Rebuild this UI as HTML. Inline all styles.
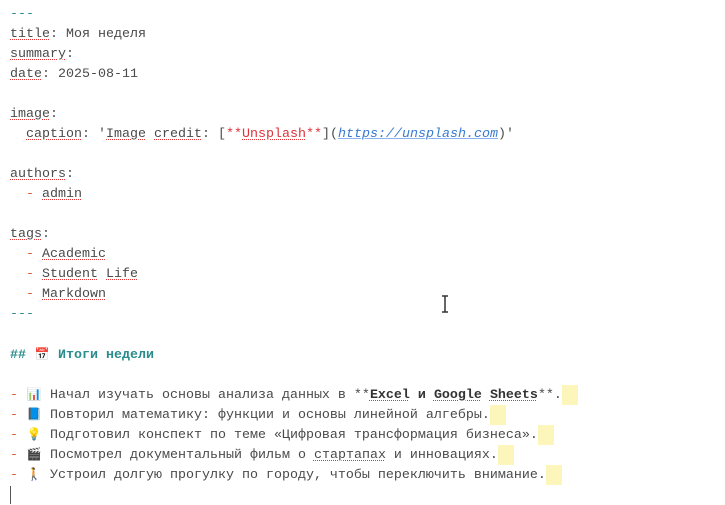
<!DOCTYPE html>
<html><head><meta charset="utf-8"><style>
body{margin:0;background:#fff;width:725px;height:500px;overflow:hidden}
.ed{position:absolute;left:10px;top:5px;font-family:"Liberation Mono","DejaVu Sans Mono",monospace;font-size:13.33px;line-height:20px;color:#4a4a4a}
.l{height:20px;white-space:pre}
.t{color:#2a8c8c}
.h{color:#2a8c8c;font-weight:bold}
.d{color:#d0602a}
.r{color:#e0303a}
.u{text-decoration-line:underline;text-decoration-style:dotted;text-decoration-color:#e83030;text-decoration-thickness:1px;text-underline-offset:2px}
.a{color:#3a7ad0;font-style:italic;text-decoration:underline;text-decoration-color:#8ab4f0}
.b{font-weight:bold;color:#333}
.y{display:inline-block;width:16px;height:20px;background:#fdf6bb;vertical-align:top}
.e{display:inline-block;width:16px;text-align:center;font-size:12px}
.cur{display:inline-block;width:1px;height:18px;background:#555;vertical-align:top;margin-top:1px}
</style></head><body>
<div class="ed"><div class="l t">---</div><div class="l"><span class="u">title</span>: Моя неделя</div><div class="l"><span class="u">summary</span>:</div><div class="l"><span class="u">date</span>: 2025-08-11</div><div class="l"> </div><div class="l"><span class="u">image</span>:</div><div class="l">  <span class="u">caption</span>: '<span class="u">Image</span> <span class="u">credit</span>: [<span class="r">**<span class="u">Unsplash</span>**</span>](<span class="a">https://unsplash.com</span>)'</div><div class="l"> </div><div class="l"><span class="u">authors</span>:</div><div class="l">  <span class="d">-</span> <span class="u">admin</span></div><div class="l"> </div><div class="l"><span class="u">tags</span>:</div><div class="l">  <span class="d">-</span> <span class="u">Academic</span></div><div class="l">  <span class="d">-</span> <span class="u">Student</span> <span class="u">Life</span></div><div class="l">  <span class="d">-</span> <span class="u">Markdown</span></div><div class="l t">---</div><div class="l"> </div><div class="l h">## <span class="e">📅</span> Итоги недели</div><div class="l"> </div><div class="l"><span class="d">-</span> <span class="e">📊</span> Начал изучать основы анализа данных в **<span class="b"><span class="u">Excel</span> и <span class="u">Google</span> <span class="u">Sheets</span></span>**.<span class="y"></span></div><div class="l"><span class="d">-</span> <span class="e">📘</span> Повторил математику: функции и основы линейной алгебры.<span class="y"></span></div><div class="l"><span class="d">-</span> <span class="e">💡</span> Подготовил конспект по теме «Цифровая трансформация бизнеса».<span class="y"></span></div><div class="l"><span class="d">-</span> <span class="e">🎬</span> Посмотрел документальный фильм о <span class="u">стартапах</span> и инновациях.<span class="y"></span></div><div class="l"><span class="d">-</span> <span class="e">🚶</span> Устроил долгую прогулку по городу, чтобы переключить внимание.<span class="y"></span></div><div class="l"><span class="cur"></span></div></div>
<svg style="position:absolute;left:440px;top:295px" width="10" height="18" viewBox="0 0 10 18"><path d="M2 1h6M5 1v16M2 17h6" stroke="#333" stroke-width="1.5" fill="none"/></svg>
</body></html>
